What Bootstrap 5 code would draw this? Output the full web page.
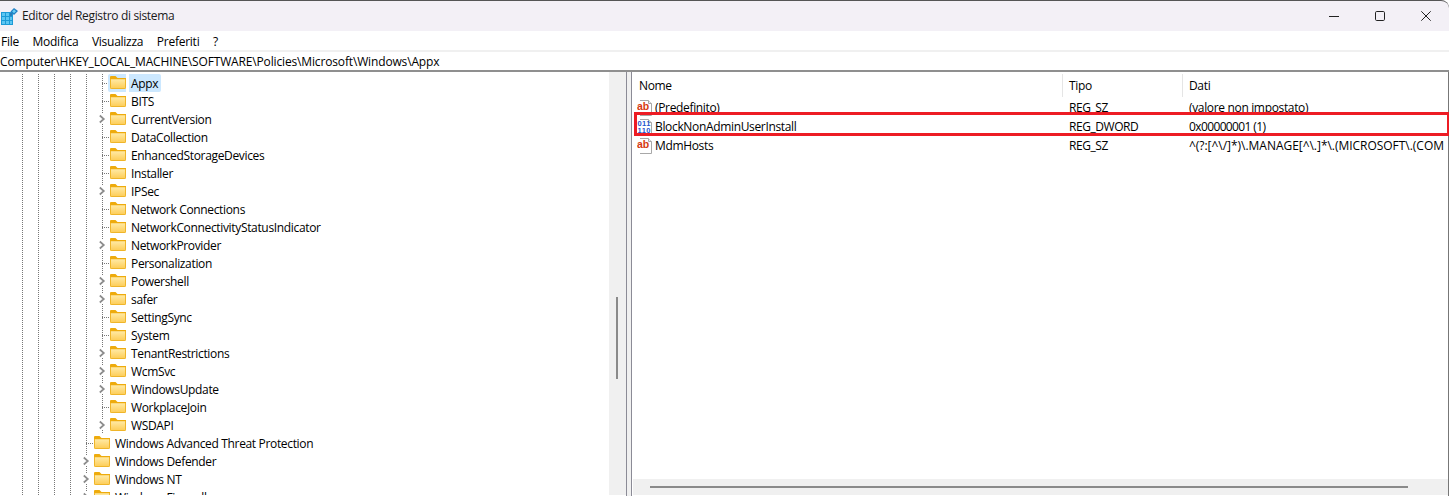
<!DOCTYPE html>
<html lang="it">
<head>
<meta charset="utf-8">
<title>Editor del Registro di sistema</title>
<link href="https://cdn.jsdelivr.net/npm/bootstrap@5.3.0/dist/css/bootstrap.min.css" rel="stylesheet">
<style>
html,body{height:100%;margin:0;overflow:hidden;background:#fff}
body{font-family:"Open Sans","Noto Sans","Liberation Sans",sans-serif;font-size:12px;line-height:18px;color:#000;letter-spacing:-.34px}
.reg-window{height:496px;position:relative;overflow:hidden}
.reg-title{height:31px;background:#f3f0f6;border-top:1px solid #555;border-top-right-radius:8px;padding-left:1px}
.reg-title span{margin-left:4px;color:#1a1a1a}
.reg-ctrl{width:46px;display:flex;justify-content:center}
.reg-menu{height:19px;padding:2px 0 0 1px;gap:13.5px;letter-spacing:-.25px}
.reg-address{height:22px;border-top:2px solid #f0f0f0;border-bottom:2px solid #8f8f8f;line-height:20px;letter-spacing:-.15px}
.reg-body{height:424px}
.reg-tree{width:609px;padding:2px 0 0 15px;overflow:hidden;height:423px}
.reg-node{height:18px}
.reg-guide{width:16px;height:18px;flex:none;background:repeating-linear-gradient(#777 0 1px,transparent 1px 2px) 7px 0/1px 100% no-repeat}
.reg-link,.reg-exp{width:15px;height:18px;flex:none;position:relative}
.reg-link{background:repeating-linear-gradient(#777 0 1px,transparent 1px 2px) 7px 0/1px 100% no-repeat,repeating-linear-gradient(90deg,#777 0 1px,transparent 1px 2px) 7px 9px/8px 1px no-repeat}
.reg-exp{background:repeating-linear-gradient(#777 0 1px,transparent 1px 2px) 7px 0/1px 100% no-repeat}
.reg-exp svg{display:block;background:#fff;margin-top:4px}
.reg-folder{width:16px;height:13px;flex:none;margin-top:-1px}
.reg-name{margin-left:3px;padding:0 2px;height:18px;line-height:19px}
.reg-sel .reg-name{background:#cce8ff;border-radius:0 2px 2px 0;padding-right:3px}
.reg-sel .reg-link{background:repeating-linear-gradient(#777 0 1px,transparent 1px 2px) 7px 0/1px 100% no-repeat,repeating-linear-gradient(90deg,#777 0 1px,transparent 1px 2px) 7px 9px/6px 1px no-repeat}
.reg-iconbox{background:#cce8ff;height:18px;display:flex;align-items:center;padding-left:2px;margin-left:-2px;border-radius:2px 0 0 2px}
.reg-vscroll{width:17px;height:423px;background:#f0f0f0;flex:none;padding:225px 0 0 7px}
.reg-vthumb{width:2px;height:82px;background:#8a8a8a}
.reg-split{width:6px;flex:none;height:424px;border-left:1px solid #8b8b96;border-right:1px solid #8b8b96;background:#f0f0f0}
.reg-right{flex:1;height:424px;position:relative;border-right:1.5px solid #777;min-width:0}
.reg-head{height:26px;padding-top:2px}
.reg-c1{width:430px;padding-left:7px;flex:none}
.reg-c2{width:120px;padding-left:6px;flex:none;border-left:1px solid #e5e5e5}
.reg-c3{padding-left:6px;border-left:1px solid #e5e5e5;flex:1;white-space:nowrap;overflow:hidden}
.reg-head>div{height:23px;line-height:23px}
.reg-line{height:19px;line-height:19px}
.reg-line .reg-c2,.reg-line .reg-c3{border-left-color:transparent}
.reg-line .reg-c1{padding-left:5px;display:flex;align-items:center}
.reg-line svg{width:16px;height:16px;flex:none;margin-right:2px}
.reg-line .reg-c2{letter-spacing:-.45px}
.reg-digits{letter-spacing:-.62px}
.reg-long{letter-spacing:-.03px}
.reg-mark{position:absolute;left:2px;right:-2px;top:40px;height:24px;border:3px solid #ed1c24;pointer-events:none}
.reg-hscroll{position:absolute;left:1px;right:0;top:407px;height:16px;background:#f0f0f0;padding:7px 0 0 17px}
.reg-hthumb{width:758px;height:2px;background:#8a8a8a}
.reg-ab{font:700 10.5px "Liberation Sans",sans-serif;fill:#d63a10;letter-spacing:0}
.reg-bin{font:700 7.5px "Liberation Sans",sans-serif;fill:#1f55d0;letter-spacing:0}
</style>
</head>
<body>
<svg width="0" height="0" class="position-absolute">
<defs>
<linearGradient id="fg" x1="0" y1="0" x2="0" y2="1"><stop offset="0" stop-color="#ffeaa6"/><stop offset="1" stop-color="#fdcb52"/></linearGradient>
<symbol id="folder" viewBox="0 0 16 13">
<path d="M0 1.200C0 .5.500 0 1.200 0h4.300l2 2H16v2H0z" fill="#eeab0c"/>
<path d="M0 3.200h16v8.600c0 .7-.5 1.200-1.200 1.200H1.200C.5 13 0 12.500 0 11.800z" fill="url(#fg)"/>
<path d="M.5 3v8.800c0 .4.300.7.700.700h13.600c.4 0 .7-.3.700-.7V3" fill="none" stroke="#efb52a"/>
</symbol>
<symbol id="chev" viewBox="0 0 15 10"><path d="M4.800 1.500 8.800 5 4.800 8.500" fill="none" stroke="#8c8c8c" stroke-width="1.700"/></symbol>
<symbol id="page" viewBox="0 0 16 16"><path d="M3 .5h8.500l3 3v12H3" fill="#fff" stroke="#a8a8a8"/><path d="M11.500.5v3h3" fill="#eee" stroke="#a8a8a8"/></symbol>
</defs>
</svg>
<div class="reg-window">
  <div class="reg-title d-flex align-items-center">
    <svg width="17" height="17" viewBox="0 0 17 17" class="flex-none">
      <path d="M0 4h12v13H0z" fill="#1c9ad6"/>
      <path d="M1 5h3v3H1zM5 5h3v3H5zM1 9h3v3H1zM5 9h3v3H5zM9 9h2v3H9zM1 13h3v3H1zM5 13h3v3H5zM9 13h2v3H9z" fill="#5cc6f2"/>
      <path d="M9 5h2v3H9z" fill="#2b7cb8"/>
      <path d="M13 0l4 3-4 4-3.500-3.500z" fill="#1f7fc4"/><path d="M13 1.500l2 1.700-2 2-1.800-1.800z" fill="#6cd0f5"/>
    </svg>
    <span>Editor del Registro di sistema</span>
    <div class="ms-auto d-flex">
      <div class="reg-ctrl"><svg width="10" height="10" viewBox="0 0 10 10"><path d="M0 5.500h10" stroke="#222"/></svg></div>
      <div class="reg-ctrl"><svg width="10" height="10" viewBox="0 0 10 10"><rect x=".5" y=".5" width="9" height="9" rx="1.200" fill="none" stroke="#222"/></svg></div>
      <div class="reg-ctrl"><svg width="10" height="10" viewBox="0 0 10 10"><path d="M.3.300l9.400 9.400M9.700.300.3 9.700" stroke="#222"/></svg></div>
    </div>
  </div>
  <div class="reg-menu d-flex align-items-center"><span>File</span><span>Modifica</span><span>Visualizza</span><span>Preferiti</span><span>?</span></div>
  <div class="reg-address">Computer\HKEY_LOCAL_MACHINE\SOFTWARE\Policies\Microsoft\Windows\Appx</div>
  <div class="reg-body d-flex">
    <div class="reg-tree">
      <div class="reg-node d-flex align-items-center reg-sel"><i class="reg-guide"></i><i class="reg-guide"></i><i class="reg-guide"></i><i class="reg-guide"></i><i class="reg-guide"></i><i class="reg-link"></i><div class="reg-iconbox"><svg class="reg-folder"><use href="#folder"/></svg></div><div class="reg-name">Appx</div></div>
      <div class="reg-node d-flex align-items-center"><i class="reg-guide"></i><i class="reg-guide"></i><i class="reg-guide"></i><i class="reg-guide"></i><i class="reg-guide"></i><i class="reg-link"></i><svg class="reg-folder"><use href="#folder"/></svg><div class="reg-name">BITS</div></div>
      <div class="reg-node d-flex align-items-center"><i class="reg-guide"></i><i class="reg-guide"></i><i class="reg-guide"></i><i class="reg-guide"></i><i class="reg-guide"></i><i class="reg-exp"><svg width="15" height="10"><use href="#chev"/></svg></i><svg class="reg-folder"><use href="#folder"/></svg><div class="reg-name">CurrentVersion</div></div>
      <div class="reg-node d-flex align-items-center"><i class="reg-guide"></i><i class="reg-guide"></i><i class="reg-guide"></i><i class="reg-guide"></i><i class="reg-guide"></i><i class="reg-link"></i><svg class="reg-folder"><use href="#folder"/></svg><div class="reg-name">DataCollection</div></div>
      <div class="reg-node d-flex align-items-center"><i class="reg-guide"></i><i class="reg-guide"></i><i class="reg-guide"></i><i class="reg-guide"></i><i class="reg-guide"></i><i class="reg-link"></i><svg class="reg-folder"><use href="#folder"/></svg><div class="reg-name">EnhancedStorageDevices</div></div>
      <div class="reg-node d-flex align-items-center"><i class="reg-guide"></i><i class="reg-guide"></i><i class="reg-guide"></i><i class="reg-guide"></i><i class="reg-guide"></i><i class="reg-link"></i><svg class="reg-folder"><use href="#folder"/></svg><div class="reg-name">Installer</div></div>
      <div class="reg-node d-flex align-items-center"><i class="reg-guide"></i><i class="reg-guide"></i><i class="reg-guide"></i><i class="reg-guide"></i><i class="reg-guide"></i><i class="reg-exp"><svg width="15" height="10"><use href="#chev"/></svg></i><svg class="reg-folder"><use href="#folder"/></svg><div class="reg-name">IPSec</div></div>
      <div class="reg-node d-flex align-items-center"><i class="reg-guide"></i><i class="reg-guide"></i><i class="reg-guide"></i><i class="reg-guide"></i><i class="reg-guide"></i><i class="reg-link"></i><svg class="reg-folder"><use href="#folder"/></svg><div class="reg-name">Network Connections</div></div>
      <div class="reg-node d-flex align-items-center"><i class="reg-guide"></i><i class="reg-guide"></i><i class="reg-guide"></i><i class="reg-guide"></i><i class="reg-guide"></i><i class="reg-link"></i><svg class="reg-folder"><use href="#folder"/></svg><div class="reg-name">NetworkConnectivityStatusIndicator</div></div>
      <div class="reg-node d-flex align-items-center"><i class="reg-guide"></i><i class="reg-guide"></i><i class="reg-guide"></i><i class="reg-guide"></i><i class="reg-guide"></i><i class="reg-exp"><svg width="15" height="10"><use href="#chev"/></svg></i><svg class="reg-folder"><use href="#folder"/></svg><div class="reg-name">NetworkProvider</div></div>
      <div class="reg-node d-flex align-items-center"><i class="reg-guide"></i><i class="reg-guide"></i><i class="reg-guide"></i><i class="reg-guide"></i><i class="reg-guide"></i><i class="reg-link"></i><svg class="reg-folder"><use href="#folder"/></svg><div class="reg-name">Personalization</div></div>
      <div class="reg-node d-flex align-items-center"><i class="reg-guide"></i><i class="reg-guide"></i><i class="reg-guide"></i><i class="reg-guide"></i><i class="reg-guide"></i><i class="reg-exp"><svg width="15" height="10"><use href="#chev"/></svg></i><svg class="reg-folder"><use href="#folder"/></svg><div class="reg-name">Powershell</div></div>
      <div class="reg-node d-flex align-items-center"><i class="reg-guide"></i><i class="reg-guide"></i><i class="reg-guide"></i><i class="reg-guide"></i><i class="reg-guide"></i><i class="reg-exp"><svg width="15" height="10"><use href="#chev"/></svg></i><svg class="reg-folder"><use href="#folder"/></svg><div class="reg-name">safer</div></div>
      <div class="reg-node d-flex align-items-center"><i class="reg-guide"></i><i class="reg-guide"></i><i class="reg-guide"></i><i class="reg-guide"></i><i class="reg-guide"></i><i class="reg-link"></i><svg class="reg-folder"><use href="#folder"/></svg><div class="reg-name">SettingSync</div></div>
      <div class="reg-node d-flex align-items-center"><i class="reg-guide"></i><i class="reg-guide"></i><i class="reg-guide"></i><i class="reg-guide"></i><i class="reg-guide"></i><i class="reg-link"></i><svg class="reg-folder"><use href="#folder"/></svg><div class="reg-name">System</div></div>
      <div class="reg-node d-flex align-items-center"><i class="reg-guide"></i><i class="reg-guide"></i><i class="reg-guide"></i><i class="reg-guide"></i><i class="reg-guide"></i><i class="reg-exp"><svg width="15" height="10"><use href="#chev"/></svg></i><svg class="reg-folder"><use href="#folder"/></svg><div class="reg-name">TenantRestrictions</div></div>
      <div class="reg-node d-flex align-items-center"><i class="reg-guide"></i><i class="reg-guide"></i><i class="reg-guide"></i><i class="reg-guide"></i><i class="reg-guide"></i><i class="reg-exp"><svg width="15" height="10"><use href="#chev"/></svg></i><svg class="reg-folder"><use href="#folder"/></svg><div class="reg-name">WcmSvc</div></div>
      <div class="reg-node d-flex align-items-center"><i class="reg-guide"></i><i class="reg-guide"></i><i class="reg-guide"></i><i class="reg-guide"></i><i class="reg-guide"></i><i class="reg-exp"><svg width="15" height="10"><use href="#chev"/></svg></i><svg class="reg-folder"><use href="#folder"/></svg><div class="reg-name">WindowsUpdate</div></div>
      <div class="reg-node d-flex align-items-center"><i class="reg-guide"></i><i class="reg-guide"></i><i class="reg-guide"></i><i class="reg-guide"></i><i class="reg-guide"></i><i class="reg-link"></i><svg class="reg-folder"><use href="#folder"/></svg><div class="reg-name">WorkplaceJoin</div></div>
      <div class="reg-node d-flex align-items-center"><i class="reg-guide"></i><i class="reg-guide"></i><i class="reg-guide"></i><i class="reg-guide"></i><i class="reg-guide"></i><i class="reg-exp"><svg width="15" height="10"><use href="#chev"/></svg></i><svg class="reg-folder"><use href="#folder"/></svg><div class="reg-name">WSDAPI</div></div>
      <div class="reg-node d-flex align-items-center"><i class="reg-guide"></i><i class="reg-guide"></i><i class="reg-guide"></i><i class="reg-guide"></i><i class="reg-link"></i><svg class="reg-folder"><use href="#folder"/></svg><div class="reg-name">Windows Advanced Threat Protection</div></div>
      <div class="reg-node d-flex align-items-center"><i class="reg-guide"></i><i class="reg-guide"></i><i class="reg-guide"></i><i class="reg-guide"></i><i class="reg-exp"><svg width="15" height="10"><use href="#chev"/></svg></i><svg class="reg-folder"><use href="#folder"/></svg><div class="reg-name">Windows Defender</div></div>
      <div class="reg-node d-flex align-items-center"><i class="reg-guide"></i><i class="reg-guide"></i><i class="reg-guide"></i><i class="reg-guide"></i><i class="reg-exp"><svg width="15" height="10"><use href="#chev"/></svg></i><svg class="reg-folder"><use href="#folder"/></svg><div class="reg-name">Windows NT</div></div>
      <div class="reg-node d-flex align-items-center"><i class="reg-guide"></i><i class="reg-guide"></i><i class="reg-guide"></i><i class="reg-guide"></i><i class="reg-exp"><svg width="15" height="10"><use href="#chev"/></svg></i><svg class="reg-folder"><use href="#folder"/></svg><div class="reg-name">Windows Firewall</div></div>
    </div>
    <div class="reg-vscroll"><div class="reg-vthumb"></div></div>
    <div class="reg-split"></div>
    <div class="reg-right">
      <div class="reg-head d-flex"><div class="reg-c1">Nome</div><div class="reg-c2">Tipo</div><div class="reg-c3">Dati</div></div>
      <div class="reg-line d-flex"><div class="reg-c1"><svg viewBox="0 0 16 16"><use href="#page"/><text class="reg-ab" x="0" y="10">ab</text></svg>(Predefinito)</div><div class="reg-c2">REG_SZ</div><div class="reg-c3">(valore non impostato)</div></div>
      <div class="reg-line d-flex"><div class="reg-c1"><svg viewBox="0 0 16 16"><use href="#page"/><text class="reg-bin" x=".5" y="7" textLength="13">011</text><text class="reg-bin" x=".5" y="14" textLength="13">110</text></svg>BlockNonAdminUserInstall</div><div class="reg-c2">REG_DWORD</div><div class="reg-c3 reg-digits">0x00000001 (1)</div></div>
      <div class="reg-line d-flex"><div class="reg-c1"><svg viewBox="0 0 16 16"><use href="#page"/><text class="reg-ab" x="0" y="10">ab</text></svg>MdmHosts</div><div class="reg-c2">REG_SZ</div><div class="reg-c3 reg-long">^(?:[^\/]*)\.MANAGE[^\.]*\.(MICROSOFT\.(COM</div></div>
      <div class="reg-mark"></div>
      <div class="reg-hscroll"><div class="reg-hthumb"></div></div>
    </div>
  </div>
</div>
</body>
</html>
